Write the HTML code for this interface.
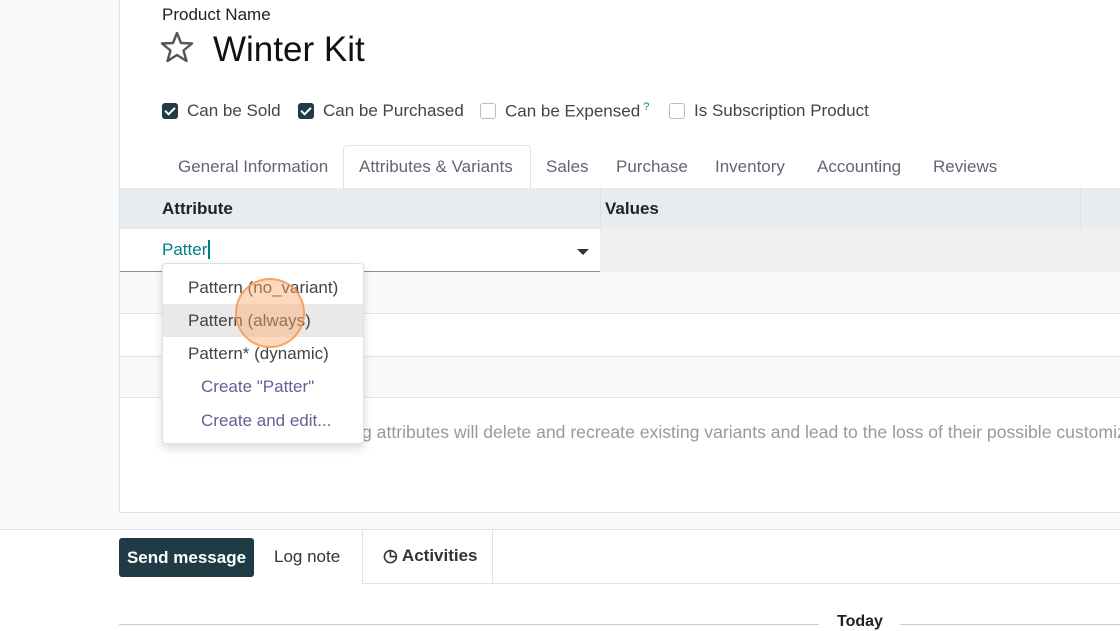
<!DOCTYPE html><html><head><style>
*{margin:0;padding:0;box-sizing:border-box}
body{width:1120px;height:626px;overflow:hidden;background:#fff;font-family:"Liberation Sans",sans-serif;position:relative;color:#222}
.a{position:absolute}
.cb{position:absolute;width:16px;height:16px;border-radius:3px;top:103px}
.on{background:#1f3b45}
.off{border:1px solid #bbb;background:#fff}
.on:after{content:"";position:absolute;left:5px;top:2px;width:4px;height:8px;border:solid #fff;border-width:0 2px 2px 0;transform:rotate(45deg)}
.lbl{position:absolute;top:101px;font-size:17px;color:#444}
.tab{position:absolute;top:157px;font-size:17px;color:#5f6675}
.mi{position:absolute;left:188px;font-size:17px;color:#444}
</style></head><body>
<div class="a" style="left:0;top:0;width:119px;height:530px;background:#f8f9fa"></div>
<div class="a" style="left:119px;top:0;width:1px;height:512px;background:#dee2e6"></div>
<div class="a" style="left:119px;top:512px;width:1001px;height:18px;background:#f8f9fa;border-top:1px solid #dee2e6"></div>
<div class="a" style="left:0;top:529px;width:1120px;height:1px;background:#dee2e6"></div>
<div class="a" style="left:162px;top:5px;font-size:17px;color:#222">Product Name</div>
<svg class="a" style="left:160px;top:31px" width="34" height="32" viewBox="0 0 34 32"><path d="M17 2 L21 12 L32 12.5 L23.5 19.5 L26.5 30 L17 24 L7.5 30 L10.5 19.5 L2 12.5 L13 12 Z" fill="none" stroke="#555" stroke-width="2.4" stroke-linejoin="round"/></svg>
<div class="a" style="left:213px;top:30px;font-size:35px;color:#111">Winter Kit</div>
<div class="cb on" style="left:162px"></div><div class="lbl" style="left:187px">Can be Sold</div>
<div class="cb on" style="left:298px"></div><div class="lbl" style="left:323px">Can be Purchased</div>
<div class="cb off" style="left:480px"></div><div class="lbl" style="left:505px">Can be Expensed<sup style="font-size:11px;color:#017e84"> ?</sup></div>
<div class="cb off" style="left:669px"></div><div class="lbl" style="left:694px">Is Subscription Product</div>
<div class="a" style="left:343px;top:145px;width:188px;height:44px;border:1px solid #dee2e6;border-bottom:none;background:#fff;border-radius:4px 4px 0 0"></div>
<div class="tab" style="left:178px">General Information</div>
<div class="tab" style="left:359px">Attributes &amp; Variants</div>
<div class="tab" style="left:546px">Sales</div>
<div class="tab" style="left:616px">Purchase</div>
<div class="tab" style="left:715px">Inventory</div>
<div class="tab" style="left:817px">Accounting</div>
<div class="tab" style="left:933px">Reviews</div>
<div class="a" style="left:120px;top:188px;width:1000px;height:41px;background:#e9ecef"></div>
<div class="a" style="left:600px;top:188px;width:1px;height:41px;background:#dee2e6"></div>
<div class="a" style="left:1080px;top:188px;width:1px;height:41px;background:#dee2e6"></div>
<div class="a" style="left:162px;top:199px;font-size:17px;font-weight:bold;color:#222">Attribute</div>
<div class="a" style="left:605px;top:199px;font-size:17px;font-weight:bold;color:#222">Values</div>
<div class="a" style="left:600px;top:229px;width:520px;height:43px;background:#f0f0f0"></div>
<div class="a" style="left:120px;top:271px;width:480px;height:1px;background:#8a8fa8"></div>
<div class="a" style="left:162px;top:240px;font-size:17px;color:#017e84">Patter<span style="border-left:2px solid #017e84;margin-left:1px"></span></div>
<div class="a" style="left:577px;top:249px;border:6px solid transparent;border-top:6px solid #333;border-bottom:none"></div>
<div class="a" style="left:120px;top:272px;width:1000px;height:42px;background:#fafafa;border-bottom:1px solid #e5e5e5"></div>
<div class="a" style="left:120px;top:356px;width:1000px;height:42px;background:#fafafa;border-top:1px solid #e5e5e5;border-bottom:1px solid #e5e5e5"></div>
<div class="a" style="left:362px;top:422px;font-size:17.6px;color:#999;white-space:nowrap">g attributes will delete and recreate existing variants and lead to the loss of their possible customizations</div>
<div class="a" style="left:162px;top:263px;width:202px;height:181px;background:#fff;border:1px solid #e0e0e0;border-radius:4px;box-shadow:0 4px 10px rgba(0,0,0,.15)"></div>
<div class="a" style="left:163px;top:304px;width:200px;height:33px;background:#e9e9e9"></div>
<div class="mi" style="top:278px">Pattern (no_variant)</div>
<div class="mi" style="top:311px">Pattern (always)</div>
<div class="mi" style="top:344px">Pattern* (dynamic)</div>
<div class="mi" style="left:201px;top:377px;color:#6b5b95">Create "Patter"</div>
<div class="mi" style="left:201px;top:411px;color:#6b5b95">Create and edit...</div>
<div class="a" style="left:235px;top:278px;width:70px;height:70px;border-radius:50%;background:rgba(253,170,110,.45);border:2px solid rgba(245,150,80,.8)"></div>
<div class="a" style="left:119px;top:538px;width:135px;height:39px;background:#1f3b45;border-radius:3px;color:#fff;font-size:17px;font-weight:bold;text-align:center;line-height:39px">Send message</div>
<div class="a" style="left:274px;top:547px;font-size:17px;color:#333">Log note</div>
<div class="a" style="left:362px;top:530px;width:131px;height:54px;border-left:1px solid #dee2e6;border-right:1px solid #dee2e6"></div>
<div class="a" style="left:362px;top:583px;width:758px;height:1px;background:#dee2e6"></div>
<div class="a" style="left:383px;top:546px;font-size:17px;color:#333;font-weight:bold">&#9719; Activities</div>
<div class="a" style="left:119px;top:624px;width:700px;height:1px;background:#ccc"></div>
<div class="a" style="left:900px;top:624px;width:220px;height:1px;background:#ccc"></div>
<div class="a" style="left:837px;top:613px;font-size:16px;font-weight:bold;color:#222">Today</div>
</body></html>
